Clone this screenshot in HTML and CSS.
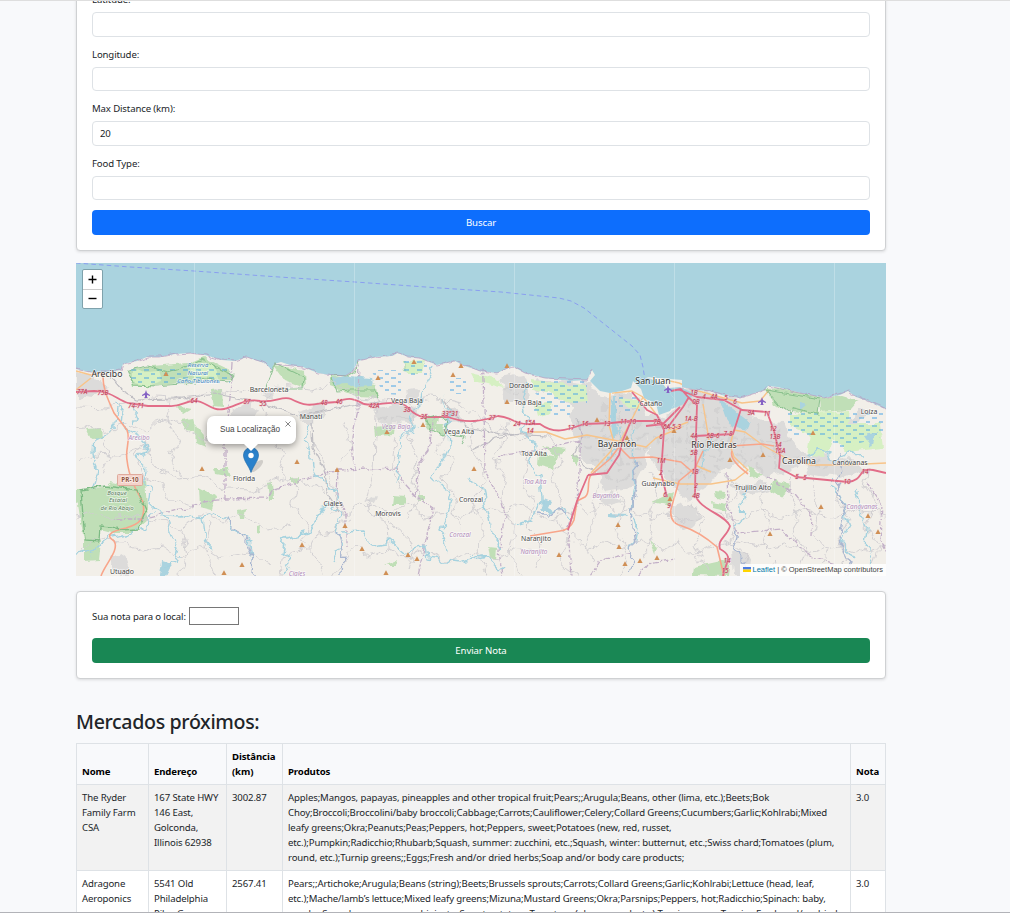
FILE: index.html
```html
<!DOCTYPE html>
<html lang="pt">
<head>
<meta charset="utf-8">
<title>Mercados próximos</title>
<link rel="stylesheet" href="styles.css">
</head>
<body>
<main class="container">
<form class="card search-card">
<label>Latitude:</label><input class="field" type="text">
<label>Longitude:</label><input class="field" type="text">
<label>Max Distance (km):</label><input class="field" type="text" value="20">
<label>Food Type:</label><input class="field" type="text">
<button class="btn btn-primary" type="button">Buscar</button>
</form>
<section class="map">
<svg class="tiles" viewBox="76 263 810 313">
<defs>
<filter id="meander" x="66" y="340" width="830" height="246" filterUnits="userSpaceOnUse"><feTurbulence type="fractalNoise" baseFrequency=".07" numOctaves="3" seed="4"/><feDisplacementMap in="SourceGraphic" scale="15" xChannelSelector="R" yChannelSelector="G"/></filter>
<filter id="ripple" x="66" y="340" width="830" height="246" filterUnits="userSpaceOnUse"><feTurbulence type="fractalNoise" baseFrequency=".12" numOctaves="2" seed="9"/><feDisplacementMap in="SourceGraphic" scale="6" xChannelSelector="R" yChannelSelector="G"/></filter>
<pattern id="marsh" width="13" height="8" patternUnits="userSpaceOnUse"><path d="M1 2h5M8 6h4" stroke="#4aa5e6" stroke-width="1"/></pattern>
<path id="peak" d="M0-2.7 2.6 2h-5.2z" fill="#d08f55"/>
<path id="plane" d="M0-4 1-1 4 1v1L1 1v2l1 1H-2l1-1V1l-3 1V1l3-2z" fill="#8461c4"/>
<clipPath id="land"><path d="M76 369 90 372 108 372 121 370 123 364 137 361 147 357 160 357 175 354 190 353 205 355 222 360 235 361 247 357 255 360 265 363 272 370 274 364 281 362 290 365 303 367 318 373 330 375 345 376 353 371 358 361 375 357 392 356 398 353 408 357 420 358 437 365 455 361 465 366 480 371 497 373 512 366 525 373 545 378 570 381 587 380 592 370 595 375 590 381 600 391 610 393 622 391 631 388 633 381 641 389 644 398 656 404 659 415 670 411 676 401 663 384 646 377 670 379 682 380 682 387 695 390 710 391 725 396 740 398 755 393 765 390 768 386 778 387 785 389 805 394 825 398 840 395 848 391 856 397 868 401 886 409V576H76z"/></clipPath>
</defs>
<rect x="76" y="263" width="810" height="313" fill="#aad3df"/>
<g clip-path="url(#land)">
<rect x="76" y="340" width="810" height="236" fill="#f2efe9"/>
<g fill="#dcdbda" filter="url(#meander)">
<path d="M76 374 98 377 109 386 96 398 76 396zM236 409 252 401 259 412 241 420 226 420zM256 395 270 388 274 399zM298 411 323 403 326 418 304 425zM374 410 402 403 420 413 412 425 385 424zM405 391 416 389 417 402 404 402zM440 413 459 409 466 421 448 423zM499 378 523 374 531 395 523 407 506 401zM535 378 590 384 594 405 573 407 540 388zM568 415 590 390 606 394 625 392 642 401 650 422 646 455 638 487 606 492 591 466 577 455 578 437zM648 417 670 412 682 398 688 389 735 398 753 419 785 421 792 445 807 457 795 472 766 475 741 463 721 468 705 491 681 500 664 476 648 452zM802 454 850 459 868 469 843 479 805 473zM832 443 860 410 868 412 851 439zM733 487 761 480 769 492 745 499zM365 499 376 494 373 505zM108 558 123 551 130 574 118 576zM730 551 751 557 749 576 732 575zM672 507 692 501 701 518 689 530 672 525zM599 498 615 492 623 504 606 508z"/>
</g>
<g fill="none" stroke="#cccbcc" stroke-width="2.5" stroke-dasharray="9 4 3 3" opacity=".55" filter="url(#meander)">
<path d="M578 424H648M583 437H650M586 449H645M592 462H640M603 477H637M605 402V480M619 397V488M633 401V466M675 398V493M688 396V492M703 399V479M719 407V468M733 420V458M745 419V466M760 424V470M776 426V471M655 427H749M652 441H791M660 457H799M667 472H723M550 388 589 396M812 463H862M380 418H414M501 389H525"/>
</g>
<g filter="url(#ripple)">
<g fill="#c0dfb7">
<path d="M76 491 103 488 111 482 127 486 145 480 148 519 132 533H112L100 530 99 543 84 541zM84 541H101L99 560 84 561zM76 490 92 490 84 500 76 503zM86 429 101 428 102 438 91 439zM181 420 193 418 196 431 185 430zM210 390 222 389 223 407 213 406zM199 488 216 497 212 510 200 507zM238 510 247 508 245 519 239 519zM257 526 261 525 260 534 257 533zM267 483 273 482 274 499 269 499zM194 422 203 434 207 447 196 443zM214 468 228 468 231 477 215 474zM175 405 191 408 183 413zM128 370 152 366 188 363 203 357 230 370 231 379 195 381 156 386 133 386zM273 365 305 370 306 388 284 380zM330 375 346 378 376 384 379 398 357 397 330 386zM402 361 425 363 417 374 404 371zM374 427 395 425 394 435 375 436zM394 496 406 497 403 505 393 505zM427 415 438 418 435 429 425 427zM436 424 444 424 443 434 436 433zM538 453 558 457 553 469 537 465zM543 446 566 449 556 457zM488 546 497 547 496 560 490 558zM650 541 657 547 655 554zM766 389 779 388 820 397 818 414 790 411 773 405zM820 398 842 396 859 401 851 410 821 412zM774 480 790 484 783 498 769 491zM711 502 727 505 725 511 713 508zM715 491 725 492 724 499 716 498zM694 567 730 559 728 576 693 575zM748 465 762 476 751 478zM651 502 674 492 671 506zM384 566 398 560 396 566zM418 496 424 496 424 501 418 501zM291 478 299 477 298 483 291 482zM573 453 578 456 577 466 573 463z"/>
</g>
<g fill="#d6f0c3"><path d="M132 372 159 370 162 381 147 386 132 382zM188 365 213 365 219 378 194 377zM532 380 585 386 587 401 566 403 549 391 532 390zM534 405 552 402 550 413 537 417zM620 398 642 401 639 410 622 405zM790 414 850 411 848 424 880 424 883 448 847 452 833 439 824 457 807 456 810 435 790 426zM402 362 425 360 422 373 408 373zM470 373 495 378 504 388 474 381z"/></g>
</g>
<path fill="url(#marsh)" d="M129 369H230V383H129zM371 370 401 370 401 395 384 394zM404 360H427V375H404zM449 378H466V394H449zM532 380H587V403H545L532 390zM534 405H570V416H534zM613 396H640V412H613zM787 411H884V436L840 449 825 435H787z"/>
<g fill="#aad3df" filter="url(#ripple)">
<path d="M332 378 349 376 372 378 373 386 353 387 347 384 334 385zM719 398 733 409 750 423 748 430 732 426 725 416zM611 397 615 397 617 435 613 440 611 420zM800 402 806 405 800 410zM864 435 876 433 872 447zM544 498 551 501 548 508 556 512 541 512zM162 561 172 564 166 576 160 576zM608 513 628 514 618 518 608 517z"/>
</g>
<path fill="#aad3df" d="M647 390 680 387 695 394 682 405 669 410z"/>
<g fill="none" stroke="#cfcdd0" stroke-width=".9" filter="url(#meander)">
<path d="M76 433 90 425 109 433 126 424 148 432 161 420 184 426 203 439 227 437 244 430M76 407 105 408 130 404 153 397 184 399 218 391 248 395 276 386 310 389 330 383 360 397 399 402 433 398 463 404 485 422 511 436 537 437M76 464 92 455 116 456 146 448 150 465 177 478 202 474 225 489 251 490 276 481 303 478 325 493M76 516 91 511 109 519 137 516 157 522 181 529 202 514 225 524 243 515 269 530 290 524M80 557 94 540 123 541 142 552 160 548 182 556 202 546 220 557 248 552 269 563M146 439 136 455 142 474 164 486 170 501 194 506M269 391 262 409 274 422 269 441 285 452 279 471 297 488 293 509 309 522 301 540 317 559 322 576M310 409 311 438 322 457 329 480 337 499M331 514 348 513 362 505 385 513 408 504 422 517 446 513 459 519 483 505 502 511 519 503 546 519 571 514M378 403 375 435 374 475 367 498 371 516 389 519 390 549M390 512 397 527 408 536 413 551 407 572M410 398 414 420 409 436 419 459 412 481 421 497 406 520M444 407 449 426 439 449 451 458 443 480 458 496 451 516 463 526M476 421 469 437 479 457 486 478 473 499 482 528 475 553 488 576M505 420 502 441 495 462 507 480 503 507 515 526 509 553 524 576M521 447 529 464 522 485 535 502 526 529 541 544 535 566M546 435 560 456 552 478 563 499 556 519 570 541 560 563 577 576M577 505 591 516 601 505 618 515 631 506 650 521 665 510 681 522 699 519M573 536 590 550 604 541 624 550 641 539 663 550 678 542 694 556 714 546M598 484 592 501 599 517 587 541 593 563M617 486 624 504 615 529 628 548 618 576M648 475 658 497 648 517 654 540 643 558M725 475 737 495 724 511 739 524 731 541 747 558 739 576M764 482 759 507 768 522 762 548 775 561 768 576M793 478 787 492 799 511 792 533 806 550 799 571M817 474 811 492 822 512 815 534 828 550 816 576M840 480 835 498 850 520 837 537 848 557 840 574M870 467 865 487 876 504 866 525 878 544 872 570M714 511 741 520 757 510 781 518 801 510 831 520 850 510 886 515M718 545 739 540 767 549 788 543 811 554 838 543 863 552 886 546M333 576 344 558 358 547 370 556 389 549 407 559 423 550 448 562 468 550 499 560 514 549 546 552M282 576 284 558 305 551 318 533 334 531 352 516M170 398 166 420 178 440 171 462 184 480M104 440 112 458 104 476M182 530 188 552 178 576M210 522 204 545 214 576M344 420 350 445 341 462M396 437 391 470 402 490M690 500 704 520 694 545 706 574"/>
</g>
<g fill="none" stroke="#bfbec3" stroke-width="1.2" filter="url(#ripple)">
<path d="M110 376 123 391 136 400 174 399 216 394 258 402 301 416 319 412 351 405 381 402M312 423 313 448 325 469 327 493 339 511M442 399 454 414 467 427 500 434 547 436M470 451 496 438 532 432M577 419 582 437 574 454 584 466 595 471"/>
</g>
<g fill="none" stroke="#c3b0c8" stroke-width="1.3" stroke-dasharray="6 1.5 2 1.5" filter="url(#ripple)">
<path d="M232 363 230 398 225 432 225 499 202 502 188 509 167 512 141 519 114 519M225 499 267 498 272 490 312 477 339 470 397 468 404 484 415 496 433 508 418 576M338 470 337 497 346 515 346 546M359 357 358 410 352 437 354 469M434 416 429 450 419 463 416 498M482 354 484 404 485 474 501 499 506 517 499 550 502 576M581 424 580 455 577 502 568 526 571 576M727 472 728 505 737 533 781 529 812 557 836 564M767 476 796 495 812 516 811 536M867 482 882 505 880 540 886 553M590 576 601 560 632 553M637 577 648 564 675 559M498 456 541 450 579 441"/>
</g>
<g fill="none" stroke="#a5d2df" stroke-width="1.4" stroke-linejoin="round" filter="url(#meander)">
<path d="M117 403 124 414 123 428 142 438 145 451 137 462 146 470 144 483 151 490 149 505 160 508 165 518 179 519 190 515 202 518 216 513 228 520 236 530 249 542 252 560M130 409 134 416 132 424M119 411 117 424 108 434 95 437 94 452 98 468 92 491M77 556 95 553 108 537 130 532 149 527 151 511M163 516 171 536 181 545 177 562 163 565M306 424 302 437 309 451 312 469 322 482 330 488 338 492 333 508 342 515 337 531 342 542 332 560M342 532 362 531 370 546 392 543 404 553 414 549 426 546 428 558 457 562 487 556M284 576 292 560 281 552 284 538 310 530 322 514 332 500M434 366 422 389 419 405 408 416 414 429 402 438 399 455 397 473 395 485M526 383 522 399 526 412 522 427 535 444 530 466 540 475 542 500 533 520 515 526M443 399 451 415 447 431 448 447 439 466 436 480 453 493 449 509 441 529 446 552M470 477 484 492 488 511 492 534 502 549M610 397 615 418 617 432 621 445 610 460M753 483 742 503 744 515 737 531M637 426 635 441 634 466 636 490 632 511 637 524 632 550M832 484 842 503 848 526 841 539 855 557M856 488 861 512 869 526 867 550 876 573M808 455 820 450 833 460 847 454 865 455M711 435 705 448 704 465 690 480M470 556 486 555 500 570M547 512 562 506 568 519M202 518 205 540 214 550"/>
</g>
<g fill="none" stroke="#a9b6d0" stroke-width="1.4" filter="url(#meander)"><path d="M228 520 236 528 247 543 253 561 252 576M337 531 342 549 341 576M539 513 548 515 558 507 567 517M634 461 637 490 631 517 634 546 629 573M839 453 842 474 837 493 845 514 839 537 851 562 843 576M738 532 733 549 743 559 746 570"/></g>
<g fill="none" stroke="#f8c489" stroke-width="1.4" stroke-linejoin="round"><path d="M76 371 91 375 103 372M76 390 91 378M527 432 546 432 565 439 587 435 613 440 646 447 656 438 682 427M610 393 609 425 613 439 611 451 591 473M612 393 632 391 643 397 656 414M643 397 634 415 619 444M670 381 679 383 695 390 720 397 742 403 760 401 769 390M703 404 707 428 709 440M653 478 680 484 711 484 735 480 748 470 734 457 730 445 734 430 745 432 764 446M764 446 786 458 811 465 844 465 886 463M695 465 711 472M668 430 688 422"/></g>
<g fill="none" stroke="#f8a58a" stroke-width="1.6" stroke-linejoin="round"><path d="M103 373C102 390 110 403 114 413L127 430C131 440 125 448 127 460 129 478 136 490 143 502 146 520 139 524 126 528 112 531 104 535 114 541 120 550 105 564 101 576M619 447 630 458 652 457 681 462 696 475M619 447 610 459 591 475C586 482 591 493 585 497L577 501 574 520Q570 530 560 531L530 536M731 446 762 444 774 446M732 451C729 459 740 468 748 474M703 451 695 468 679 481 671 509Q669 523 682 526 700 532 717 547L724 576"/></g>
<g fill="none" stroke="#e26d88" stroke-width="1.8" stroke-linejoin="round"><path d="M76 392 94 391C112 391 117 400 128 403L148 406H169C181 407 185 401 194 401 205 400 211 412 224 409 237 406 245 398 260 401 275 403 283 395 291 399 306 407 312 405 323 403L337 402C351 396 356 400 364 404 378 407 389 400 402 404 410 406 410 415 424 417H448C467 424 482 421 498 416 512 417 514 424 527 424H540C555 435 567 430 584 424L611 423 630 421H659L668 427 683 407 689 397M577 501 568 530M577 501 588 475M588 475 607 473 619 455 623 440 631 421M671 391 681 389 688 397 697 405 696 435 695 494C699 510 725 514 730 526 727 537 717 539 720 549 735 557 725 562 723 576M680 390 697 397 724 400 742 410 767 412 774 431 780 456 779 468 796 477 848 482C865 480 857 467 873 470L886 473M741 409 733 434 695 436M632 392 647 410 657 415 664 430 661 473 667 497M646 426 663 424 680 407"/></g>
<path d="M81 491 104 486 137 490 146 510 138 529 120 530 112 527 100 526 99 541 85 540z" fill="none" stroke="#7cba83" stroke-width="1.3" filter="url(#ripple)"/>
</g>
<g fill="none" stroke="#7cba83" stroke-width="1.1" opacity=".8" filter="url(#ripple)"><path d="M128 370 148 366 167 372 190 365 201 359 220 369 233 375 229 381 204 379 195 383 155 386 134 385zM266 388 275 363 304 377 303 389 285 389M330 375 347 376 355 371 358 362M331 378 337 391 352 390 375 390 379 398M766 390 820 399 818 414 793 408 790 413 777 404zM425 418 437 415 448 422 443 435 432 430zM448 435 465 437 461 443"/></g>
<path d="M76 369 90 372 108 372 121 370 123 364 137 361 147 357 160 357 175 354 190 353 205 355 222 360 235 361 247 357 255 360 265 363 272 370M274 364 303 367 318 373 345 376 353 371 358 361 375 357 398 353 408 357 420 358 437 365 455 361 480 371 497 373 512 366 525 373 545 378 587 380 592 370M682 387 710 391 740 398 765 390 768 386 805 394 825 398 848 391 868 401 886 409" fill="none" stroke="#b79abf" stroke-width="1" opacity=".7" filter="url(#ripple)"/>
<path d="M76 263 130 267 194 271 279 277 355 282 440 288 501 292 559 298 571 301 584 308 608 327 632 346 640 355 643 367 645 380" fill="none" stroke="#8a9ff0" stroke-width="1" stroke-dasharray="4.5 3.2"/>
<path d="M194.500 263V576M354.500 263V576M514.500 263V576M674.500 263V576M834.500 263V576" stroke="#fff" stroke-width=".7" opacity=".35"/>
<g>
<use href="#peak" x="166" y="374"/><use href="#peak" x="202" y="469"/><use href="#peak" x="297" y="462"/><use href="#peak" x="337" y="470"/><use href="#peak" x="345" y="526"/><use href="#peak" x="302" y="545"/><use href="#peak" x="362" y="549"/><use href="#peak" x="408" y="555"/><use href="#peak" x="417" y="559"/><use href="#peak" x="386" y="573"/><use href="#peak" x="378" y="378"/><use href="#peak" x="387" y="432"/><use href="#peak" x="414" y="362"/><use href="#peak" x="453" y="375"/><use href="#peak" x="461" y="366"/><use href="#peak" x="423" y="425"/><use href="#peak" x="474" y="469"/><use href="#peak" x="507" y="366"/><use href="#peak" x="507" y="402"/><use href="#peak" x="597" y="420"/><use href="#peak" x="627" y="438"/><use href="#peak" x="618" y="525"/><use href="#peak" x="619" y="547"/><use href="#peak" x="625" y="564"/><use href="#peak" x="640" y="561"/><use href="#peak" x="657" y="558"/><use href="#peak" x="559" y="555"/><use href="#peak" x="674" y="431"/><use href="#peak" x="670" y="499"/><use href="#peak" x="730" y="460"/><use href="#peak" x="763" y="455"/><use href="#peak" x="813" y="433"/><use href="#peak" x="821" y="507"/><use href="#peak" x="868" y="516"/><use href="#peak" x="878" y="532"/><use href="#peak" x="770" y="534"/><use href="#peak" x="242" y="565"/><use href="#peak" x="224" y="573"/>
<use href="#plane" x="146" y="394"/><use href="#plane" x="668" y="389"/><use href="#plane" x="762" y="401"/>
</g>
<g class="road-ref"><text x="82" y="394">77A</text><text x="103" y="395">75B</text><text x="136" y="408">74-71</text><text x="194" y="403">64</text><text x="247" y="404">57</text><text x="263" y="406">55</text><text x="324" y="405">48</text><text x="339" y="404">46</text><text x="374" y="408">42A</text><text x="407" y="412">38</text><text x="424" y="419">35</text><text x="450" y="416">33"31</text><text x="492" y="420">27</text><text x="517" y="426">24</text><text x="530" y="425">15A</text><text x="530" y="433">14</text><text x="571" y="430">17</text><text x="585" y="426">16</text><text x="607" y="426">13</text><text x="628" y="424">11-10</text><text x="657" y="424">7B</text><text x="672" y="429">6A-5-3</text><text x="661" y="439">6</text><text x="661" y="463">1M</text><text x="661" y="475">2</text><text x="665" y="497">6</text><text x="669" y="508">9</text><text x="694" y="395">1B</text><text x="704" y="399">4</text><text x="714" y="399">4A</text><text x="726" y="400">5</text><text x="735" y="404">6</text><text x="696" y="404">0B</text><text x="691" y="421">1A-B</text><text x="694" y="438">4A</text><text x="713" y="438">5B-6</text><text x="728" y="436">7-8</text><text x="694" y="455">5B</text><text x="695" y="474">1B</text><text x="696" y="488">2</text><text x="696" y="498">4B</text><text x="751" y="415">9A</text><text x="767" y="416">11</text><text x="773" y="431">12</text><text x="775" y="439">13B</text><text x="778" y="447">14</text><text x="780" y="453">15A</text><text x="797" y="479">5</text><text x="805" y="480">5</text><text x="847" y="484">10</text><text x="865" y="474">14</text><text x="727" y="563">14</text><text x="725" y="573">15</text></g>
<g class="area"><text x="139" y="440">Arecibo</text><text x="396" y="429">Vega Baja</text><text x="535" y="484">Toa Alta</text><text x="606" y="498">Bayamón</text><text x="460" y="537">Corozal</text><text x="534" y="554">Naranjito</text><text x="862" y="509">Canóvanas</text><text x="297" y="575.500">Ciales</text></g>
<g class="reserve"><text x="198" y="367">Reserva</text><text x="198" y="375">Natural</text><text x="198" y="383">Caño Tiburones</text></g>
<g class="forest"><text x="117" y="495">Bosque</text><text x="118" y="502">Estatal</text><text x="117" y="510">de Rio Abajo</text></g>
<rect x="117.500" y="474.500" width="25" height="11" rx="1" fill="#f4d2c9" stroke="#dfaa9c"/><text class="shield" x="130" y="482">PR-10</text>
<g class="town"><text x="269" y="392">Barceloneta</text><text x="311" y="419">Manatí</text><text x="407" y="403">Vega Baja</text><text x="459" y="434">Vega Alta</text><text x="244" y="481">Florida</text><text x="333" y="506">Ciales</text><text x="388" y="516">Morovis</text><text x="471" y="502">Corozal</text><text x="521" y="388">Dorado</text><text x="528" y="405">Toa Baja</text><text x="534" y="456">Toa Alta</text><text x="651" y="406">Cataño</text><text x="658" y="486">Guaynabo</text><text x="536" y="541">Naranjito</text><text x="753" y="490">Trujillo Alto</text><text x="850" y="465">Canóvanas</text><text x="869" y="414">Loíza</text><text x="122" y="574">Utuado</text></g>
<g class="city"><text x="107" y="377">Arecibo</text><text x="653" y="384">San Juan</text><text x="617" y="447">Bayamón</text><text x="714" y="448">Río Piedras</text><text x="799" y="464">Carolina</text></g>
<ellipse cx="257" cy="466" rx="8" ry="3" transform="rotate(-45 257 466)" fill="#555" opacity=".22"/>
<path d="M251 472.500C249 466 243.500 461 243.500 455a7.500 7.500 0 0 1 15 0C258.500 461 253 466 251 472.500z" fill="#2a81cb" stroke="#226dac" stroke-width=".7"/><circle cx="251" cy="455.500" r="2.700" fill="#fff"/>
</svg>
<div class="zoom"><span><svg viewBox="0 0 9 9"><path d="M4.500 .5v8M.5 4.500h8"/></svg></span><span><svg viewBox="0 0 9 9"><path d="M.5 4.500h8"/></svg></span></div>
<div class="popup">Sua Localização<svg class="close" viewBox="0 0 6 6"><path d="m.5.5 5 5m0-5-5 5"/></svg></div>
<div class="attribution"><svg class="flag" viewBox="0 0 8 5"><path fill="#4c7be1" d="M0 0h8v2.500H0z"/><path fill="#ffd500" d="M0 2.500h8V5H0z"/></svg><span class="leaflet">Leaflet</span> | © OpenStreetMap contributors</div>
</section>
<form class="card rating-card">
<div class="rating"><label>Sua nota para o local:</label><input type="text"></div>
<button class="btn btn-success" type="button">Enviar Nota</button>
</form>
<h2>Mercados próximos:</h2>
<table>
<colgroup><col class="c-name"><col class="c-address"><col class="c-distance"><col><col class="c-rating"></colgroup>
<thead><tr><th>Nome</th><th>Endereço</th><th>Distância<br>(km)</th><th>Produtos</th><th>Nota</th></tr></thead>
<tbody>
<tr><td>The Ryder<br>Family Farm<br>CSA</td><td>167 State HWY<br>146 East,<br>Golconda,<br>Illinois 62938</td><td>3002.87</td><td>Apples;Mangos, papayas, pineapples and other tropical fruit;Pears;;Arugula;Beans, other (lima, etc.);Beets;Bok<br>Choy;Broccoli;Broccolini/baby broccoli;Cabbage;Carrots;Cauliflower;Celery;Collard Greens;Cucumbers;Garlic;Kohlrabi;Mixed<br>leafy greens;Okra;Peanuts;Peas;Peppers, hot;Peppers, sweet;Potatoes (new, red, russet,<br>etc.);Pumpkin;Radicchio;Rhubarb;Squash, summer: zucchini, etc.;Squash, winter: butternut, etc.;Swiss chard;Tomatoes (plum,<br>round, etc.);Turnip greens;;Eggs;Fresh and/or dried herbs;Soap and/or body care products;</td><td>3.0</td></tr>
<tr><td>Adragone<br>Aeroponics</td><td>5541 Old<br>Philadelphia<br>Pike, Gap,</td><td>2567.41</td><td>Pears;;Artichoke;Arugula;Beans (string);Beets;Brussels sprouts;Carrots;Collard Greens;Garlic;Kohlrabi;Lettuce (head, leaf,<br>etc.);Mache/lamb’s lettuce;Mixed leafy greens;Mizuna;Mustard Greens;Okra;Parsnips;Peppers, hot;Radicchio;Spinach: baby,<br>regular;Squash, summer: zucchini, etc.;Sweet potatoes;Tomatoes (plum, round, etc.);Turnip greens;Turnips;Fresh and/or dried</td><td>3.0</td></tr>
</tbody>
</table>
</main>
</body>
</html>
```
FILE: styles.css
```css
* { box-sizing: border-box; }
html { height: 100%; overflow: hidden; }
body {
  margin: 0;
  height: 913px;
  overflow: hidden;
  display: flow-root;
  position: relative;
  background: #f8f9fb;
  color: #212529;
  font: 9.6px/15px "Noto Sans", "Open Sans", sans-serif;
  letter-spacing: -.13px;
}
body::before, body::after { content: ""; position: absolute; z-index: 3; left: 0; right: 0; height: 1px; background: #dedede; }
body::before { top: 0; }
body::after { bottom: 0; background: #b2b3b8; }
.container { width: 810px; margin-left: 76px; }
.card {
  background: #fff;
  border: 1px solid #cfd1d3;
  border-radius: 4px;
  padding: 15px;
  box-shadow: 0 1px 3px rgba(0, 0, 0, .12);
}
.search-card { margin-top: -24px; height: 275px; }
.search-card label { display: block; margin-bottom: 5px; }
.field {
  display: block;
  width: 100%;
  height: 24.6px;
  margin: 0 0 10px;
  padding: 0 7px;
  border: 1px solid #dee2e6;
  border-radius: 4px;
  font: inherit;
  color: inherit;
  letter-spacing: inherit;
}
.btn {
  display: block;
  width: 100%;
  height: 25px;
  border: 0;
  border-radius: 4px;
  color: #fff;
  font: inherit;
  letter-spacing: -.1px;
}
.btn-primary { background: #0d6efd; }
.btn-success { background: #198754; }
.map { position: relative; height: 313px; margin: 12px 0 15px; overflow: hidden; }
.tiles { display: block; width: 810px; height: 313px; font-family: "Noto Sans", sans-serif; text-anchor: middle; letter-spacing: 0; }
.tiles text { paint-order: stroke; stroke: rgba(255, 255, 255, .6); stroke-width: 1.5px; }
.city { font-size: 8.7px; fill: #333; }
.town { font-size: 6.9px; fill: #484848; }
.area { font-size: 6.4px; font-style: italic; fill: #b18bb9; }
.road-ref { font-size: 6.4px; font-style: italic; fill: #b8304c; }
.tiles .road-ref text { stroke: rgba(240, 190, 200, .6); stroke-width: 1px; }
.reserve { font-size: 6px; font-style: italic; fill: #3e83bd; }
.forest { font-size: 6px; font-style: italic; fill: #5c7c5e; }
.shield { font-size: 6.3px; font-weight: 700; fill: #91553f; }
.zoom {
  position: absolute;
  left: 6px;
  top: 6px;
  width: 21px;
  height: 40px;
  background: #fff;
  border: 1px solid #7fa2ac;
  border-radius: 2px;
}
.zoom span { display: grid; place-items: center; height: 19px; }
.zoom span + span { border-top: 1px solid #ccc; height: 18px; }
.zoom svg { width: 9px; height: 9px; fill: none; stroke: #000; stroke-width: 1.4; }
.popup {
  position: absolute;
  left: 131px;
  top: 153px;
  width: 89px;
  height: 28px;
  padding-left: 13px;
  border-radius: 7px;
  background: #fff;
  color: #444;
  box-shadow: 0 2px 7px rgba(0, 0, 0, .4);
  font: 8.2px/27px "Liberation Sans", Arial, sans-serif;
  letter-spacing: 0;
  white-space: nowrap;
}
.popup::after { content: ""; position: absolute; left: 37px; top: 28px; border: 7px solid transparent; border-top-color: #fff; border-bottom: 0; }
.close { position: absolute; right: 5px; top: 5px; width: 6px; height: 6px; stroke: #777; stroke-width: .9; }
.attribution {
  position: absolute;
  right: 0;
  bottom: 0;
  height: 12px;
  padding: 0 3px;
  background: rgba(255, 255, 255, .85);
  color: #444;
  font: 7.5px/12px "Liberation Sans", Arial, sans-serif;
  letter-spacing: 0;
  white-space: nowrap;
}
.flag { width: 8px; height: 5px; margin-right: 2px; }
.leaflet { color: #0078a8; }
.rating-card { height: 88px; }
.rating { display: flex; height: 18px; align-items: center; gap: 2px; margin-bottom: 13px; }
.rating label { width: 95px; white-space: nowrap; }
.rating input { width: 50px; height: 18px; padding: 0; border: 1px solid #767676; }
h2 { margin: 31px 0 9px; font-size: 19.6px; line-height: 24px; font-weight: 500; letter-spacing: -.35px; }
table { width: 810px; table-layout: fixed; border-collapse: collapse; }
.c-name { width: 72px; }
.c-address { width: 78px; }
.c-distance { width: 56px; }
.c-rating { width: 35px; }
th, td { padding: 5px; border: 1px solid #dee2e6; text-align: left; vertical-align: top; white-space: nowrap; }
th { color: #000; vertical-align: bottom; }
tbody tr { background: #fff; }
tbody tr:first-child { background: #f2f2f2; }
```
